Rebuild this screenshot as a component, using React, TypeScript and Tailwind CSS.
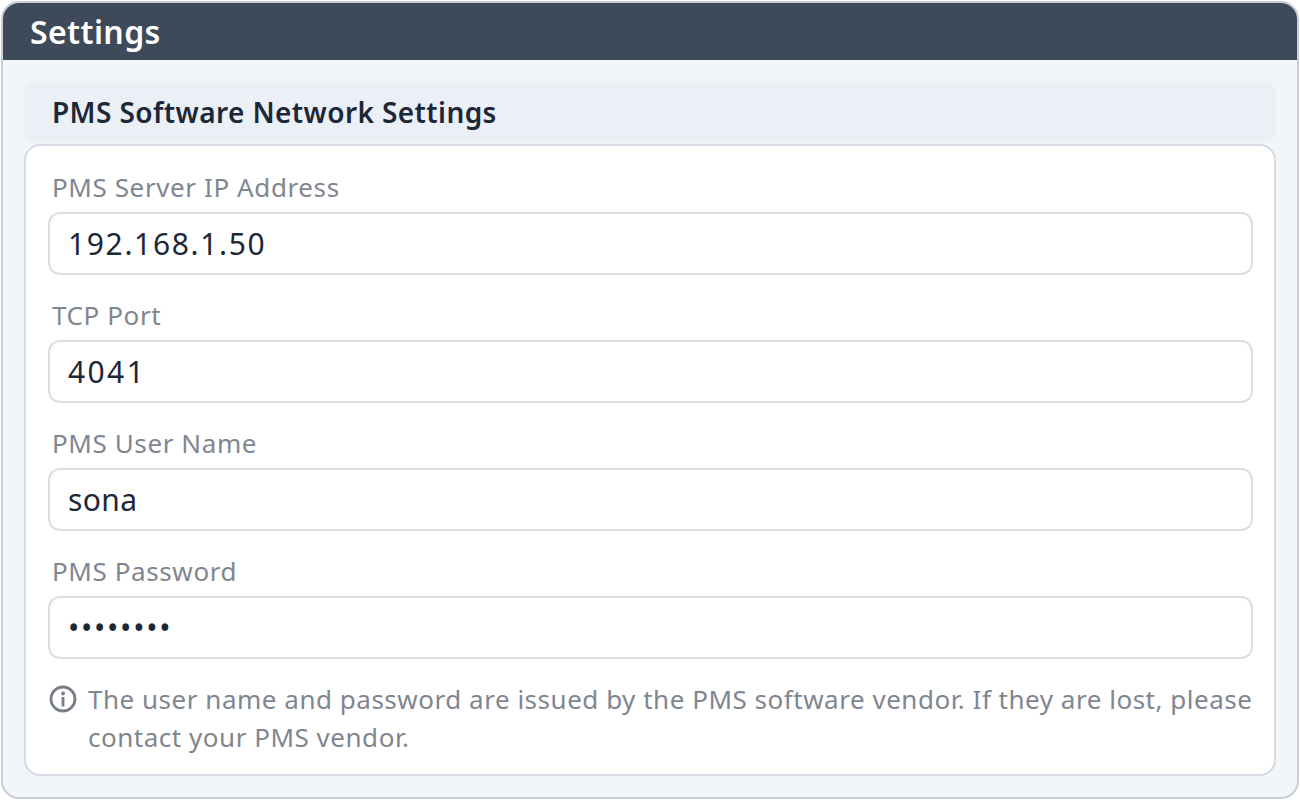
import React from 'react';

const fields = [
  { label: 'PMS Server IP Address', value: '192.168.1.50', type: 'text', tracking: 'tracking-[1.65px]' },
  { label: 'TCP Port', value: '4041', type: 'text', tracking: 'tracking-[2.4px]' },
  { label: 'PMS User Name', value: 'sona', type: 'text', tracking: 'tracking-[0.4px]' },
  { label: 'PMS Password', value: 'password', type: 'password', tracking: 'tracking-[1.75px]' },
];

const App: React.FC = () => {
  return (
    <div className="w-[1300px] h-[800px] bg-white p-px font-['Noto_Sans','Liberation_Sans',sans-serif]">
      <div className="h-[798px] flex flex-col rounded-[18px] border-2 border-[#c6ced9] bg-[#f3f6f9] overflow-hidden">
        <div className="h-[57px] shrink-0 bg-[#3e4a59] pl-[27px] flex items-center">
          <span className="text-[32px] tracking-[0.4px] font-semibold text-white leading-none">Settings</span>
        </div>
        <div className="flex-1 px-[21px] pt-[21px]">
          <div className="h-[62px] mb-px rounded-[12px] bg-[#ebf0f7] pl-[28px] flex items-center">
            <span className="text-[28px] tracking-[0.4px] font-semibold text-[#1c2738] leading-none">PMS Software Network Settings</span>
          </div>
          <div className="h-[632px] rounded-[16px] border-2 border-[#d5dbe3] bg-white pl-[22px] pr-[21px] pt-[22px]">
            {fields.map((f) => (
              <div key={f.label} className="mb-[21px]">
                <div className="h-[38px] pl-[4px] mb-[6px] text-[26px] tracking-[0.6px] leading-[38px] text-[#7f8690]">{f.label}</div>
                <input
                  readOnly
                  type={f.type}
                  value={f.value}
                  className={`w-full h-[63px] rounded-[12px] border-2 border-[#d8dfe6] bg-white px-[18px] text-[30px] text-[#1c2738] outline-none ${f.tracking}`}
                />
              </div>
            ))}
            <div className="flex mt-px text-[26px] tracking-[0.52px] leading-[38px] text-[#7f8690] whitespace-nowrap">
              <svg viewBox="0 0 28 28" className="w-[28px] h-[28px] shrink-0 mt-[5px] ml-px mr-[11px]" fill="none">
                <circle cx="14" cy="14" r="12" stroke="#777e88" strokeWidth="2.8" />
                <circle cx="14" cy="8.5" r="1.9" fill="#777e88" />
                <rect x="12.6" y="12" width="2.8" height="9.5" fill="#777e88" />
              </svg>
              <p>
                The user name and password are issued by the PMS software vendor. If they are lost, please
                <br />
                contact your PMS vendor.
              </p>
            </div>
          </div>
        </div>
      </div>
    </div>
  );
};

export default App;
